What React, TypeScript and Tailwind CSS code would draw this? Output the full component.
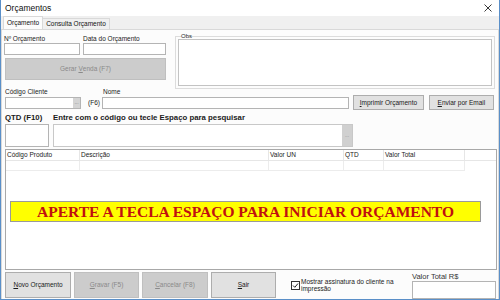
import React from "react";

const label = "text-[6.5px] leading-[7px] text-[#1a1a1a] whitespace-nowrap";

function Input({ className }: { className: string }) {
  return <div className={`shrink-0 bg-white border border-[#b4b4b4] ${className}`} />;
}

function WinButton({ children, disabled, className }: { children: React.ReactNode; disabled?: boolean; className: string }) {
  return (
    <div
      className={`shrink-0 flex items-center justify-center text-[6.5px] whitespace-nowrap border ${
        disabled ? "bg-[#cccccc] border-[#bfbfbf] text-[#8a8a8a]" : "bg-[#e1e1e1] border-[#adadad] text-[#1a1a1a]"
      } ${className}`}
    >
      {children}
    </div>
  );
}

const columns = [
  { name: "Código Produto", w: "w-[74px]" },
  { name: "Descrição", w: "w-[189px]" },
  { name: "Valor UN", w: "w-[75px]" },
  { name: "QTD", w: "w-[40px]" },
  { name: "Valor Total", w: "w-[81px]" },
];

export default function App() {
  return (
    <div className="w-[500px] h-[300px] overflow-hidden flex flex-col bg-[#f0f0f0] border-x border-b border-[#5a8fc8] font-['Liberation_Sans',Arial,sans-serif]">
      {/* Title bar */}
      <div className="h-[16px] shrink-0 bg-white flex items-center justify-between pl-[4px] pr-[7px]">
        <span className="text-[8.5px] text-[#111]">Orçamentos</span>
        <svg width="8" height="8" viewBox="0 0 8 8">
          <path d="M0.5 0.5 L7.5 7.5 M7.5 0.5 L0.5 7.5" stroke="#222" strokeWidth="0.9" />
        </svg>
      </div>

      {/* Tabs */}
      <div className="h-[13px] shrink-0 flex items-end pl-[2px]">
        <div className="h-[13px] px-[3px] flex items-center bg-[#fcfcfc] border border-b-0 border-[#d9d9d9] text-[6.5px] text-[#111]">
          Orçamento
        </div>
        <div className="h-[11px] px-[3px] flex items-center bg-[#f0f0f0] border border-l-0 border-b-0 border-[#d9d9d9] text-[6.5px] text-[#111]">
          Consulta Orçamento
        </div>
      </div>

      {/* Tab page */}
      <div className="flex-1 flex flex-col bg-[#fcfcfc] border border-[#d9d9d9]">
        {/* Row 1 */}
        <div className="flex mt-[3px] ml-[2px]">
          <div className="shrink-0 flex flex-col w-[162px]">
            <div className="h-[10px] flex items-center">
              <span className={`${label} w-[79px]`}>Nº Orçamento</span>
              <span className={label}>Data do Orçamento</span>
            </div>
            <div className="flex gap-[3px]">
              <Input className="w-[76px] h-[12px]" />
              <Input className="w-[83px] h-[12px]" />
            </div>
            <WinButton disabled className="mt-[3px] ml-[1px] w-[161px] h-[22px]">
              Gerar&nbsp;<u>V</u>enda (F7)
            </WinButton>
          </div>
          <fieldset className="shrink-0 ml-[9px] w-[320px] h-[56px] border border-[#dcdcdc] px-[2px] pb-[2px]">
            <legend className="ml-[3px] text-[6px] leading-[6px] text-[#1a1a1a]">Obs</legend>
            <div className="h-full bg-white border border-[#c3c3c3]" />
          </fieldset>
        </div>

        {/* Row 2 */}
        <div className="flex mt-[-1px] ml-[3px]">
          <span className={`${label} w-[98px]`}>Código Cliente</span>
          <span className={label}>Nome</span>
        </div>
        <div className="flex items-center h-[15px] ml-[3px]">
          <div className="shrink-0 w-[76px] h-[12px] flex bg-white border border-[#b4b4b4]">
            <div className="flex-1" />
            <div className="w-[7px] bg-[#d4d4d4] text-[5px] leading-[9px] text-[#777] text-center">...</div>
          </div>
          <span className="shrink-0 ml-[7px] text-[6.5px] text-[#1a1a1a]">(F6)</span>
          <Input className="ml-[2px] w-[247px] h-[12px]" />
          <WinButton className="ml-[4px] w-[71px] h-[15px]">
            <u>I</u>mprimir Orçamento
          </WinButton>
          <WinButton className="ml-[5px] w-[65px] h-[15px]">
            <u>E</u>nviar por Email
          </WinButton>
        </div>

        {/* Row 3 */}
        <div className="flex items-center h-[11px] mt-[2px] ml-[3px] font-bold text-[7.8px] text-[#1a1a1a]">
          <span className="w-[48px]">QTD (F10)</span>
          <span>Entre com o código ou tecle Espaço para pesquisar</span>
        </div>
        <div className="flex h-[23px] mt-[1px] ml-[3px]">
          <Input className="w-[44px] h-full" />
          <div className="shrink-0 ml-[4px] w-[300px] h-full flex bg-white border border-[#c8c8c8]">
            <div className="flex-1" />
            <div className="w-[10px] bg-[#d0d0d0] flex items-center justify-center text-[5px] text-[#888]">...</div>
          </div>
        </div>

        {/* Grid */}
        <div className="mt-[2px] ml-[3px] w-[492px] h-[121px] bg-white border border-[#a8a8a8] flex flex-col">
          <div className="flex h-[11px] border-b border-[#e6e6e6]">
            {columns.map((c) => (
              <div key={c.name} className={`${c.w} shrink-0 border-r border-[#e6e6e6] pl-[1px] text-[6.5px] leading-[10px] text-[#1a1a1a] whitespace-nowrap`}>
                {c.name}
              </div>
            ))}
          </div>
          <div className="flex h-[10px]">
            {columns.map((c) => (
              <div key={c.name} className={`${c.w} shrink-0 border-r border-b border-[#ececec]`} />
            ))}
          </div>
          <div className="mt-[30px] ml-[4px] w-[471px] h-[21px] bg-[#ffff00] border border-[#9a9a9a] flex items-center justify-center">
            <span className="font-['Liberation_Serif','Times_New_Roman',serif] font-bold text-[15.5px] leading-[15px] text-[#c01010] whitespace-nowrap">
              APERTE A TECLA ESPAÇO PARA INICIAR ORÇAMENTO
            </span>
          </div>
        </div>

        {/* Bottom row */}
        <div className="flex mt-[2px] ml-[3px] h-[27px]">
          <WinButton className="w-[66px] h-[26px]">
            <u>N</u>ovo Orçamento
          </WinButton>
          <WinButton disabled className="ml-[3px] w-[65px] h-[26px]">
            <u>G</u>ravar (F5)
          </WinButton>
          <WinButton disabled className="ml-[3px] w-[66px] h-[26px]">
            <u>C</u>ancelar (F8)
          </WinButton>
          <WinButton className="ml-[3px] w-[65px] h-[26px]">
            <u>S</u>air
          </WinButton>
          <div className="shrink-0 ml-[15px] flex items-center h-[26px]">
            <div className="w-[9px] h-[9px] bg-white border border-[#333] flex items-center justify-center">
              <svg width="7" height="7" viewBox="0 0 7 7">
                <path d="M1 3.5 L2.8 5.3 L6 1.5" stroke="#222" strokeWidth="1" fill="none" />
              </svg>
            </div>
            <span className="ml-[1px] w-[96px] text-[6.5px] leading-[7.5px] text-[#1a1a1a]">
              Mostrar assinatura do cliente na impressão
            </span>
          </div>
          <div className="shrink-0 ml-[15px] flex flex-col">
            <span className="text-[7.5px] leading-[8px] mt-[1px] text-[#333]">Valor Total R$</span>
            <Input className="w-[84px] h-[18px]" />
          </div>
        </div>
      </div>
    </div>
  );
}
